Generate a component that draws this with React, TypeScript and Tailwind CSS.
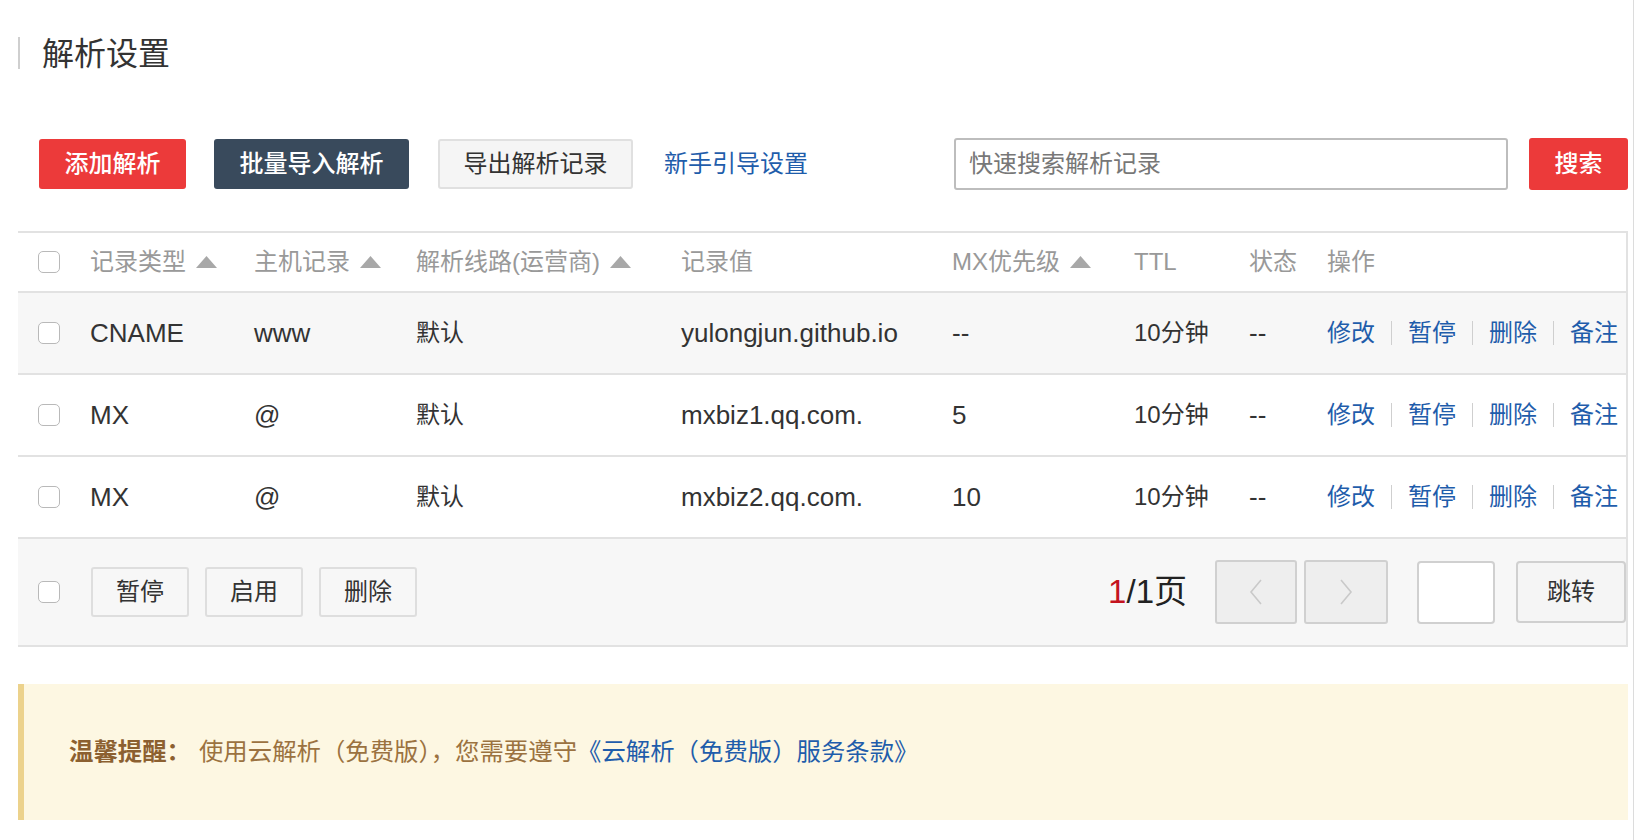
import React from 'react'

const rows = [
  { type: 'CNAME', host: 'www', line: '默认', value: 'yulongjun.github.io', mx: '--', ttl: '10分钟', status: '--', active: true },
  { type: 'MX', host: '@', line: '默认', value: 'mxbiz1.qq.com.', mx: '5', ttl: '10分钟', status: '--', active: false },
  { type: 'MX', host: '@', line: '默认', value: 'mxbiz2.qq.com.', mx: '10', ttl: '10分钟', status: '--', active: false },
]

const cols = 'grid grid-cols-[52px_164px_162px_265px_271px_182px_115px_78px_1fr] items-center pl-[20px]'

function Checkbox() {
  return <span className="block w-[22px] h-[22px] rounded-[5px] border border-[#b9b9b9] bg-white" />
}

function SortUp() {
  return (
    <svg width="21" height="12" viewBox="0 0 21 12" className="ml-[10px] inline-block shrink-0">
      <polygon points="10.5,0 21,12 0,12" fill="#a8a8a8" />
    </svg>
  )
}

function HeadCell({ label, sort }: { label: string; sort?: boolean }) {
  return (
    <div className="flex items-center text-[24px] text-[#999]">
      <span>{label}</span>
      {sort && <SortUp />}
    </div>
  )
}

function Actions() {
  const items = ['修改', '暂停', '删除', '备注']
  return (
    <div className="flex items-center gap-[16px] text-[24px] text-[#1f5dab] whitespace-nowrap">
      {items.map((t, i) => (
        <React.Fragment key={t}>
          {i > 0 && <span className="block w-px h-[24px] bg-[#cfcfcf]" />}
          <a className="cursor-pointer">{t}</a>
        </React.Fragment>
      ))}
    </div>
  )
}

export default function App() {
  return (
    <div className="w-[1636px] h-[840px] overflow-hidden bg-white text-[#333] font-['Liberation_Sans','Noto_Sans_CJK_SC',sans-serif]">
      <div className="w-[1634px] h-full border-r border-[#dcdcdc] pl-[18px] pr-[5px] pt-[37px]">
        {/* title */}
        <div className="flex items-center h-[32px] border-l-2 border-[#cfcfcf] pl-[22px]">
          <h1 className="text-[32px] leading-[32px] text-[#333] pt-[2px]">解析设置</h1>
        </div>

        {/* toolbar */}
        <div className="mt-[69px] flex items-center h-[52px]">
          <button className="ml-[21px] w-[147px] h-[50px] rounded-[3px] bg-[#ec3a3a] text-white text-[24px] font-medium">
            添加解析
          </button>
          <button className="ml-[28px] w-[195px] h-[50px] rounded-[3px] bg-[#394a5c] text-white text-[24px] font-medium">
            批量导入解析
          </button>
          <button className="ml-[29px] w-[195px] h-[50px] rounded-[3px] bg-[#f5f5f5] border-2 border-[#e0e0e0] text-[#333] text-[24px]">
            导出解析记录
          </button>
          <a className="ml-[31px] text-[24px] text-[#1f5dab] cursor-pointer">新手引导设置</a>
          <div className="ml-auto w-[554px] h-[52px] rounded-[3px] border-2 border-[#bdbdbd] bg-white flex items-center pl-[13px] text-[24px] text-[#777]">
            快速搜索解析记录
          </div>
          <button className="ml-[21px] w-[99px] h-[52px] rounded-[3px] bg-[#ec3a3a] text-white text-[24px] font-medium">
            搜索
          </button>
        </div>

        {/* table */}
        <div className="mt-[41px] border-r-2 border-[#e2e2e2]">
          <div className={`${cols} h-[62px] border-y-2 border-[#e2e2e2]`}>
            <Checkbox />
            <HeadCell label="记录类型" sort />
            <HeadCell label="主机记录" sort />
            <HeadCell label="解析线路(运营商)" sort />
            <HeadCell label="记录值" />
            <HeadCell label="MX优先级" sort />
            <HeadCell label="TTL" />
            <HeadCell label="状态" />
            <HeadCell label="操作" />
          </div>

          {rows.map((r, i) => (
            <div
              key={i}
              className={`${cols} h-[82px] border-b-2 border-[#e2e2e2] ${r.active ? 'bg-[#f7f7f7]' : 'bg-white'}`}
            >
              <Checkbox />
              <div className="text-[26px]">{r.type}</div>
              <div className="text-[26px]">{r.host}</div>
              <div className="text-[24px]">{r.line}</div>
              <div className="text-[26px]">{r.value}</div>
              <div className="text-[26px]">{r.mx}</div>
              <div className="text-[24px]">{r.ttl}</div>
              <div className="text-[26px]">{r.status}</div>
              <Actions />
            </div>
          ))}

          {/* footer */}
          <div className="flex items-center h-[108px] pl-[20px] bg-[#f7f7f7] border-b-2 border-[#e2e2e2]">
            <Checkbox />
            <div className="ml-[31px] flex items-center gap-[16px]">
              {['暂停', '启用', '删除'].map((t) => (
                <button
                  key={t}
                  className="w-[98px] h-[50px] rounded-[3px] bg-[#f7f7f7] border-2 border-[#dedede] text-[24px] text-[#333]"
                >
                  {t}
                </button>
              ))}
            </div>
            <div className="ml-auto flex items-center">
              <div className="text-[33px] text-[#222]">
                <span className="text-[#c4131e]">1</span>/1页
              </div>
              <button className="ml-[28px] w-[82px] h-[64px] rounded-[3px] bg-[#eeeeee] border-2 border-[#d0d0d0] flex items-center justify-center">
                <svg width="14" height="26" viewBox="0 0 14 26">
                  <polyline points="12,1 2,13 12,25" fill="none" stroke="#c9c9c9" strokeWidth="1.6" />
                </svg>
              </button>
              <button className="ml-[7px] w-[84px] h-[64px] rounded-[3px] bg-[#eeeeee] border-2 border-[#d0d0d0] flex items-center justify-center">
                <svg width="14" height="26" viewBox="0 0 14 26">
                  <polyline points="2,1 12,13 2,25" fill="none" stroke="#c9c9c9" strokeWidth="1.6" />
                </svg>
              </button>
              <div className="ml-[29px] w-[78px] h-[63px] rounded-[4px] bg-white border-2 border-[#d0d0d0]" />
              <button className="ml-[21px] w-[110px] h-[62px] rounded-[4px] bg-[#f5f5f5] border-2 border-[#d0d0d0] text-[24px] text-[#333]">
                跳转
              </button>
            </div>
          </div>
        </div>

        {/* notice */}
        <div className="mt-[37px] h-[136px] border-l-[6px] border-[#ecd28c] bg-[#fdf7e2] flex items-center pl-[45px] text-[24.4px] text-[#9b7240]">
          <span className="font-bold text-[#8c6030]">温馨提醒：</span>
          <span className="ml-[8px]">使用云解析（免费版），您需要遵守</span>
          <a className="text-[#1f5dab] cursor-pointer">《云解析（免费版）服务条款》</a>
        </div>
      </div>
    </div>
  )
}
